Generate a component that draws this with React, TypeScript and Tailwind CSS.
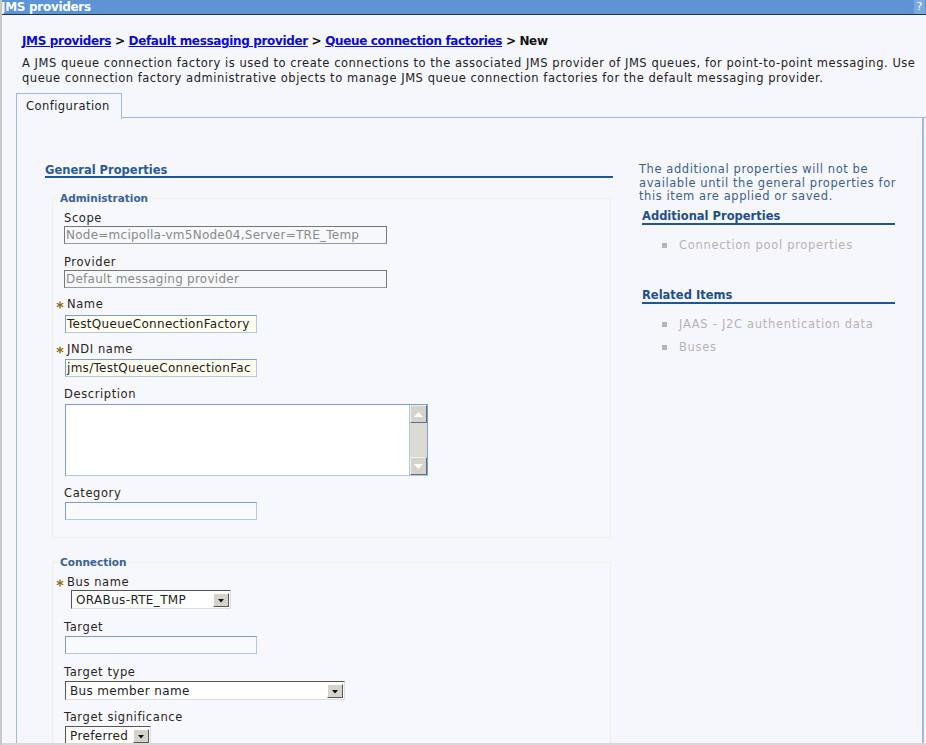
import React from 'react';

const font = { fontFamily: '"DejaVu Sans", Verdana, sans-serif' };

const Star = () => (
  <svg width="8" height="8" viewBox="0 0 8 8" className="mr-[3px]">
    <g stroke="#8a6a12" strokeWidth="1.3">
      <line x1="4" y1="0.5" x2="4" y2="7.5" />
      <line x1="0.8" y1="2.2" x2="7.2" y2="5.8" />
      <line x1="0.8" y1="5.8" x2="7.2" y2="2.2" />
    </g>
  </svg>
);

const Label = ({ text, required }: { text: string; required?: boolean }) => (
  <div className={`flex items-center h-[14px] text-[11.5px] tracking-[0.6px] text-[#2a2420] ${required ? 'ml-[3px]' : 'ml-[11px]'}`}>
    {required && <Star />}
    <span>{text}</span>
  </div>
);

const ReadOnlyBox = ({ value }: { value: string }) => (
  <div className="ml-[11px] w-[323px] h-[18px] border border-[#777] border-b-[#999] bg-[#f7f8fc] text-[12px] tracking-[0.25px] text-[#8a8a8a] leading-[16px] px-[1px] overflow-hidden whitespace-nowrap">
    {value}
  </div>
);

const TextBox = ({ value, yellow, w = 'w-[192px]' }: { value?: string; yellow?: boolean; w?: string }) => (
  <div
    className={`ml-[12px] ${w} h-[18px] border border-[#7f9dc9] border-b-[#b3c6e2] border-r-[#b3c6e2] ${
      yellow ? 'bg-[#fffff0]' : 'bg-[#f9fafe]'
    } text-[12px] tracking-[0.3px] text-[#222] leading-[16px] px-[1px] overflow-hidden whitespace-nowrap`}
  >
    {value}
  </div>
);

const DropArrow = () => (
  <div className="w-[16px] h-[14px] bg-[#d6d3cb] border border-t-white border-l-white border-b-[#555] border-r-[#555] flex items-center justify-center shrink-0">
    <svg width="6" height="4" viewBox="0 0 6 4" className="mt-[2px]">
      <polygon points="0,0 6,0 3,3.5" fill="#111" />
    </svg>
  </div>
);

const Select = ({ value, w, ml }: { value: string; w: string; ml: string }) => (
  <div className={`${ml} ${w} h-[19px] border border-t-[#555] border-l-[#555] border-b-[#ddd] border-r-[#ddd] bg-white flex items-center justify-between pl-[4px] pr-[1px]`}>
    <span className="text-[12px] tracking-[0.35px] text-[#222] whitespace-nowrap">{value}</span>
    <DropArrow />
  </div>
);

const SectionBox = ({ title, children, h }: { title: string; children: React.ReactNode; h: string }) => (
  <div className={`ml-[7px] w-[559px] ${h} border border-[#f0efe6] bg-[#f7f8fd]`}>
    <div className="ml-[7px] -mt-[7px] h-[12px] text-[10.5px] font-bold text-[#3a6396] leading-[12px]">{title}</div>
    {children}
  </div>
);

const SideHeading = ({ text }: { text: string }) => (
  <div className="ml-[3px] w-[253px] border-b-2 border-[#1f5796] text-[11.5px] font-bold text-[#1f4f86] leading-[13px]">
    {text}
  </div>
);

const SideItem = ({ text }: { text: string }) => (
  <div className="flex items-center ml-[23px] h-[14px] text-[11.5px] tracking-[0.7px] text-[#b8b2b2] whitespace-nowrap">
    <span className="w-[5px] h-[5px] bg-[#b5b5b5] mr-[12px]" />
    <span>{text}</span>
  </div>
);

export default function App() {
  return (
    <div style={font} className="w-[926px] h-[745px] overflow-hidden bg-[#f6f7fd] border-l-2 border-[#c9c9c9] relative">
      {/* title bar */}
      <div className="h-[15px] bg-[#5c94d6] border-b border-[#1b3350] flex items-center justify-between -ml-[2px]">
        <span className="pl-[1px] text-[12px] font-bold text-white leading-[14px] tracking-[-0.3px]">JMS providers</span>
        <span className="w-[11px] h-[14px] bg-[#7ba8de] text-white text-[11px] leading-[14px] text-center mr-[1px]">?</span>
      </div>

      {/* breadcrumb */}
      <div className="mt-[19px] ml-[20px] text-[12px] font-bold leading-[15px] text-[#111] whitespace-nowrap tracking-[-0.35px]">
        <a className="text-[#0b0bd4] underline">JMS providers</a> &gt;{' '}
        <a className="text-[#0b0bd4] underline">Default messaging provider</a> &gt;{' '}
        <a className="text-[#0b0bd4] underline">Queue connection factories</a> &gt; New
      </div>

      {/* description */}
      <div className="mt-[7px] ml-[20px] text-[11.5px] leading-[15px] text-[#222] whitespace-nowrap tracking-[0.53px]">
        A JMS queue connection factory is used to create connections to the associated JMS provider of JMS queues, for point-to-point messaging. Use
        <br />
        queue connection factory administrative objects to manage JMS queue connection factories for the default messaging provider.
      </div>

      {/* tab */}
      <div className="mt-[6px] ml-[14px] flex items-end">
        <div className="w-[106px] h-[26px] border border-b-0 border-[#a3b8dc] bg-[#f6f7fd] text-[11.5px] tracking-[0.45px] text-[#222] pl-[9px] pt-[5px] leading-[14px] relative top-[1px]">
          Configuration
        </div>
        <div className="flex-1 border-b border-[#a3b8dc]" />
      </div>

      {/* panel */}
      <div className="ml-[14px] mr-[2px] h-[640px] border-l border-r-2 border-[#a3b8dc] flex">
        {/* left column */}
        <div className="ml-[28px] w-[568px] pt-[46px]">
          <div className="border-b-2 border-[#1f5796] text-[11.5px] font-bold text-[#2b5a96] leading-[12px]">
            General Properties
          </div>

          <div className="mt-[20px]">
            <SectionBox title="Administration" h="h-[340px]">
              <div className="mt-[8px]">
                <Label text="Scope" />
                <ReadOnlyBox value="Node=mcipolla-vm5Node04,Server=TRE_Temp" />
              </div>
              <div className="mt-[12px]">
                <Label text="Provider" />
                <ReadOnlyBox value="Default messaging provider" />
              </div>
              <div className="mt-[10px]">
                <Label text="Name" required />
                <div className="mt-[3px]">
                  <TextBox value="TestQueueConnectionFactory" yellow />
                </div>
              </div>
              <div className="mt-[10px]">
                <Label text="JNDI name" required />
                <div className="mt-[2px]">
                  <TextBox value="jms/TestQueueConnectionFac" yellow />
                </div>
              </div>
              <div className="mt-[11px]">
                <Label text="Description" />
                <div className="mt-[2px] ml-[12px] w-[363px] h-[72px] border border-[#7f9dc9] border-b-[#b3c6e2] bg-white flex justify-end">
                  <div className="w-[18px] h-full flex flex-col bg-[#dcdbd3] border-l border-[#b3c6e2]">
                    <div className="h-[18px] bg-[#d6d3cb] border border-t-[#eee] border-l-[#eee] border-b-[#5a6f8f] border-r-[#5a6f8f] flex items-center justify-center">
                      <svg width="9" height="5" viewBox="0 0 9 5"><polygon points="0,5 9,5 4.5,0" fill="#fff" /></svg>
                    </div>
                    <div className="flex-1" />
                    <div className="h-[18px] bg-[#d6d3cb] border border-t-[#eee] border-l-[#eee] border-b-[#5a6f8f] border-r-[#5a6f8f] flex items-center justify-center">
                      <svg width="9" height="5" viewBox="0 0 9 5"><polygon points="0,0 9,0 4.5,5" fill="#fff" /></svg>
                    </div>
                  </div>
                </div>
              </div>
              <div className="mt-[11px]">
                <Label text="Category" />
                <div className="mt-[1px]">
                  <TextBox />
                </div>
              </div>
            </SectionBox>
          </div>

          <div className="mt-[24px]">
            <SectionBox title="Connection" h="h-[200px]">
              <div className="mt-[8px]">
                <Label text="Bus name" required />
                <div className="mt-[0px]">
                  <Select value="ORABus-RTE_TMP" w="w-[160px]" ml="ml-[18px]" />
                </div>
              </div>
              <div className="mt-[12px]">
                <Label text="Target" />
                <div className="mt-[1px]">
                  <TextBox />
                </div>
              </div>
              <div className="mt-[12px]">
                <Label text="Target type" />
                <div className="mt-[1px]">
                  <Select value="Bus member name" w="w-[280px]" ml="ml-[12px]" />
                </div>
              </div>
              <div className="mt-[11px]">
                <Label text="Target significance" />
                <div className="mt-[1px]">
                  <Select value="Preferred" w="w-[86px]" ml="ml-[12px]" />
                </div>
              </div>
            </SectionBox>
          </div>
        </div>

        {/* right column */}
        <div className="ml-[26px] w-[270px] pt-[45px]">
          <div className="text-[11.5px] tracking-[0.58px] leading-[13.5px] text-[#3d5f8e] whitespace-nowrap">
            The additional properties will not be
            <br />
            available until the general properties for
            <br />
            this item are applied or saved.
          </div>
          <div className="mt-[6px]">
            <SideHeading text="Additional Properties" />
          </div>
          <div className="mt-[14px]">
            <SideItem text="Connection pool properties" />
          </div>
          <div className="mt-[36px]">
            <SideHeading text="Related Items" />
          </div>
          <div className="mt-[14px]">
            <SideItem text="JAAS - J2C authentication data" />
          </div>
          <div className="mt-[9px]">
            <SideItem text="Buses" />
          </div>
        </div>
      </div>
      <div className="absolute left-0 right-0 bottom-0 h-[2px] bg-[#ddd6d6]" />
    </div>
  );
}
